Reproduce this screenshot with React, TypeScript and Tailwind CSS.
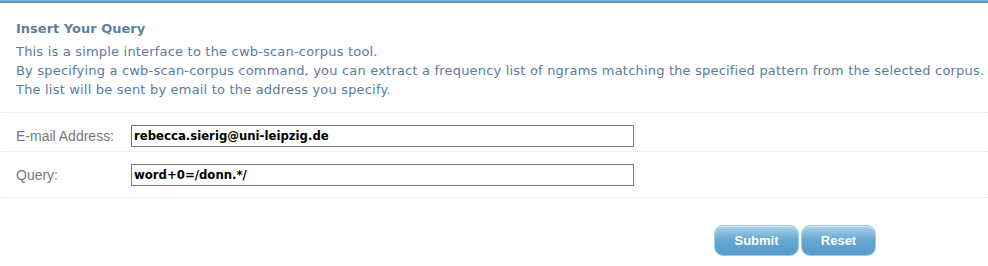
import React from "react";

export default function App() {
  const btn =
    "h-[31px] rounded-[9px] border border-[#9ecbe6] bg-gradient-to-b from-[#acd2ea] via-[#64a6d1] to-[#569ccb] text-white font-bold text-[13px] font-['Liberation_Sans',sans-serif] shadow-[inset_0_1px_0_rgba(255,255,255,0.5)]";
  return (
    <div className="w-[988px] h-[266px] bg-white overflow-hidden">
      <div className="h-[3px] bg-gradient-to-b from-[#7fb2d8] to-[#4f8fc0]" />
      <div className="px-[16px] pt-[16px] text-[13px] tracking-[0.19px] text-[#5b7c9c] font-['DejaVu_Sans',sans-serif] whitespace-nowrap">
        <div className="font-bold leading-[19px] tracking-normal text-[#5e7f9e]">Insert Your Query</div>
        <div className="mt-[4px] leading-[19px]">
          <div>This is a simple interface to the cwb-scan-corpus tool.</div>
          <div>By specifying a cwb-scan-corpus command, you can extract a frequency list of ngrams matching the specified pattern from the selected corpus.</div>
          <div>The list will be sent by email to the address you specify.</div>
        </div>
      </div>
      <div className="mt-[13px] border-t border-dotted border-[#dde3e3]" />
      <div className="flex items-start h-[38px] px-[16px] pt-[12px]">
        <div className="w-[115px] h-[22px] flex items-center text-[14px] text-[#777777] font-['Liberation_Sans',sans-serif]">E-mail Address:</div>
        <div className="w-[503px] h-[22px] border border-[#7a7a7a] flex items-center pl-[2px] text-[13px] font-bold text-black font-['DejaVu_Sans_Condensed','DejaVu_Sans',sans-serif]">rebecca.sierig@uni-leipzig.de</div>
      </div>
      <div className="border-t border-dotted border-[#dde3e3]" />
      <div className="flex items-start h-[45px] px-[16px] pt-[12px]">
        <div className="w-[115px] h-[22px] flex items-center text-[14px] text-[#777777] font-['Liberation_Sans',sans-serif]">Query:</div>
        <div className="w-[503px] h-[22px] border border-[#7a7a7a] flex items-center pl-[2px] text-[13px] font-bold text-black font-['DejaVu_Sans_Condensed','DejaVu_Sans',sans-serif]">word+0=/donn.*/</div>
      </div>
      <div className="border-t border-dotted border-[#dde3e3]" />
      <div className="flex pl-[714px] pt-[27px] gap-[2px]">
        <button className={btn + " w-[85px]"}>Submit</button>
        <button className={btn + " w-[75px]"}>Reset</button>
      </div>
    </div>
  );
}
